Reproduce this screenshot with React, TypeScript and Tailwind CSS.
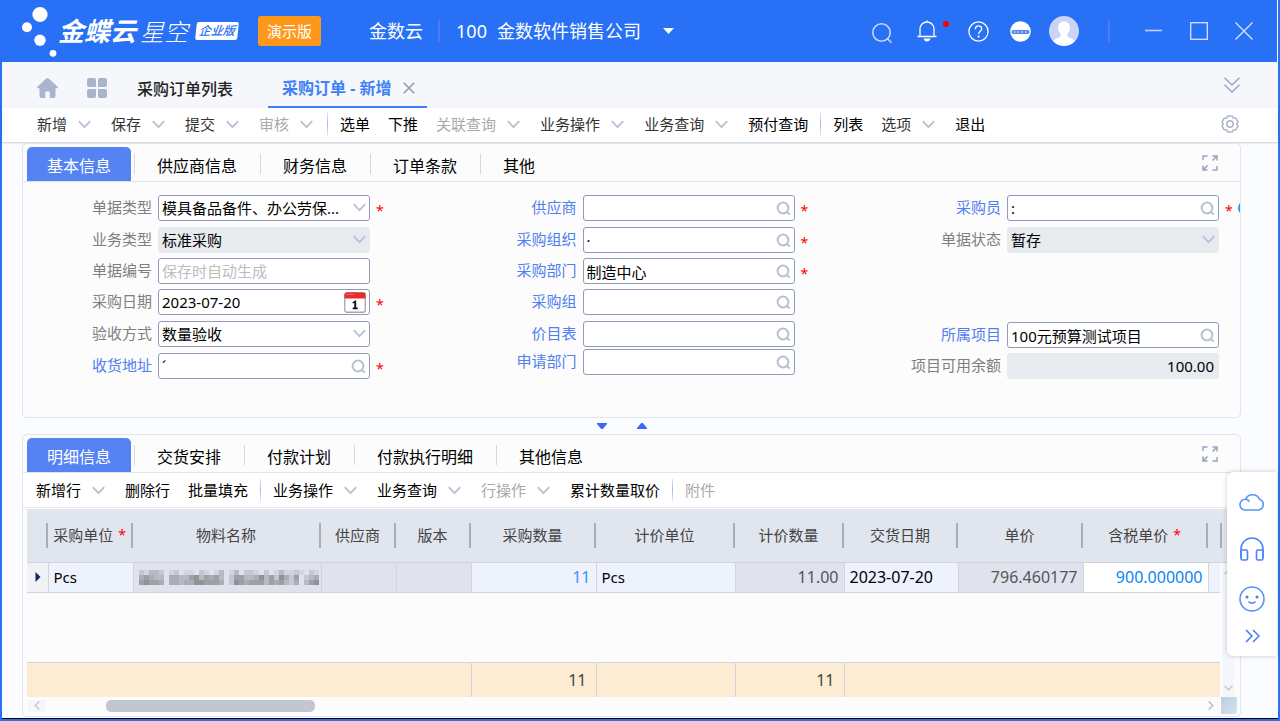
import type { ReactNode } from 'react'
import { clsx } from 'clsx'

const FONT = "font-['Noto_Sans','Noto_Sans_CJK_SC',sans-serif]"

type MenuItem = { label: string; menu?: boolean; disabled?: boolean; dark?: boolean; divider?: boolean }

const mainMenu: MenuItem[] = [
  { label: '新增', menu: true },
  { label: '保存', menu: true },
  { label: '提交', menu: true },
  { label: '审核', menu: true, disabled: true, divider: true },
  { label: '选单', dark: true },
  { label: '下推', dark: true },
  { label: '关联查询', menu: true, disabled: true },
  { label: '业务操作', menu: true },
  { label: '业务查询', menu: true },
  { label: '预付查询', dark: true, divider: true },
  { label: '列表', dark: true },
  { label: '选项', menu: true },
  { label: '退出', dark: true },
]

const detailMenu: MenuItem[] = [
  { label: '新增行', menu: true, dark: true },
  { label: '删除行', dark: true },
  { label: '批量填充', dark: true, divider: true },
  { label: '业务操作', menu: true, dark: true },
  { label: '业务查询', menu: true, dark: true },
  { label: '行操作', menu: true, disabled: true },
  { label: '累计数量取价', dark: true, divider: true },
  { label: '附件', disabled: true },
]

type FieldDef = {
  id: string
  label: string
  kind: 'select' | 'text' | 'date' | 'lookup' | 'amount'
  row: string
  value?: string
  placeholder?: string
  link?: boolean
  required?: boolean
  disabled?: boolean
}

const leftFields: FieldDef[] = [
  { id: 'billType', label: '单据类型', kind: 'select', row: 'h-8', value: '模具备品备件、办公劳保...', required: true },
  { id: 'bizType', label: '业务类型', kind: 'select', row: 'h-[31px]', value: '标准采购', disabled: true },
  { id: 'billNo', label: '单据编号', kind: 'text', row: 'h-[31px]', placeholder: '保存时自动生成' },
  { id: 'date', label: '采购日期', kind: 'date', row: 'h-8', value: '2023-07-20', required: true },
  { id: 'accept', label: '验收方式', kind: 'select', row: 'h-8', value: '数量验收' },
  { id: 'address', label: '收货地址', kind: 'lookup', row: 'h-[26px]', value: 'ˊ', link: true, required: true },
]

const middleFields: FieldDef[] = [
  { id: 'supplier', label: '供应商', kind: 'lookup', row: 'h-8', link: true, required: true },
  { id: 'org', label: '采购组织', kind: 'lookup', row: 'h-[31px]', value: '·', link: true, required: true },
  { id: 'dept', label: '采购部门', kind: 'lookup', row: 'h-[31px]', value: '制造中心', link: true, required: true },
  { id: 'group', label: '采购组', kind: 'lookup', row: 'h-8', link: true },
  { id: 'priceList', label: '价目表', kind: 'lookup', row: 'h-7', link: true },
  { id: 'applyDept', label: '申请部门', kind: 'lookup', row: 'h-[26px]', link: true },
]

const buyerFields: FieldDef[] = [
  { id: 'buyer', label: '采购员', kind: 'lookup', row: 'h-8', value: ':', link: true, required: true },
  { id: 'status', label: '单据状态', kind: 'select', row: 'h-[31px]', value: '暂存', disabled: true },
]

const projectFields: FieldDef[] = [
  { id: 'project', label: '所属项目', kind: 'lookup', row: 'h-[31px]', value: '100元预算测试项目', link: true },
  { id: 'balance', label: '项目可用余额', kind: 'amount', row: 'h-[26px]', value: '100.00', disabled: true },
]

function Chevron({ className = 'text-[#b8c1d4]' }: { className?: string }) {
  return (
    <svg width="13" height="9" viewBox="0 0 13 9" fill="none" stroke="currentColor" strokeWidth="1.9" className={clsx('shrink-0', className)}>
      <path d="M0.8 1.2 6.5 7.2 12.2 1.2" />
    </svg>
  )
}

function Magnifier() {
  return (
    <svg width="15" height="15" viewBox="0 0 15 15" fill="none" stroke="#b9c0d0" strokeWidth="2">
      <circle cx="7" cy="7" r="5.4" />
      <path d="M10.2 10.4 13.8 13.6" />
    </svg>
  )
}

function CalendarIcon() {
  return (
    <svg width="22" height="21" viewBox="0 0 22 21">
      <rect x="0.75" y="0.75" width="20.5" height="19.5" rx="2" fill="#fff" stroke="#a6a6a6" strokeWidth="1.3" />
      <path d="M0.5 6.5V2.5a2 2 0 0 1 2-2h17a2 2 0 0 1 2 2v4z" fill="#ec2a2a" />
      <path d="M2.5 2.5h8" stroke="#f79a9a" strokeDasharray="1 1" />
      <path d="M8.6 10.2 11 8.6h1.2v7h1.5v1.6H8.7v-1.6h1.6v-4.7l-1.7.7z" fill="#111" />
    </svg>
  )
}

function Expand() {
  return (
    <svg width="16" height="16" viewBox="0 0 16 16" fill="none" stroke="#98a3bb" strokeWidth="1.5">
      <path d="M1 5V1h4.500M15 11V15h-4.500" />
      <path d="M10.500 5.500 14.600 1.400M10.500 1H15v4.500M5.500 10.500 1.400 14.600M1 10.500V15h4.500" />
    </svg>
  )
}

function Logo() {
  return (
    <svg width="36" height="52" viewBox="0 0 36 52" fill="#fff">
      <circle cx="18" cy="9.5" r="7.6" />
      <circle cx="5" cy="22.3" r="5" />
      <circle cx="18" cy="35.3" r="5.7" />
      <circle cx="31" cy="48.3" r="3.4" />
    </svg>
  )
}

function Toolbar({ items }: { items: MenuItem[] }) {
  return (
    <div className="flex items-center">
      {items.map((item) => (
        <div key={item.label} className="flex items-center">
          <button
            className={clsx(
              'flex items-center gap-[11px] pl-[9px] text-[15px] leading-5 whitespace-nowrap',
              item.menu ? 'pr-[11px]' : 'pr-[9px]',
              item.disabled ? 'text-[#a9a9a9]' : item.dark ? 'text-black' : 'text-[#333]',
            )}
          >
            {item.label}
            {item.menu && <Chevron />}
          </button>
          {item.divider && (
            <span className="mx-[3px] h-6 w-px bg-linear-to-b from-[#e6eef8] via-[#9dbce6] to-[#e6eef8]" />
          )}
        </div>
      ))}
    </div>
  )
}

function TabRow({ tabs }: { tabs: string[] }) {
  return (
    <div className="flex h-[38px] items-end justify-between border-b border-[#dfe4ed] pl-1 pr-[22px]">
      <div role="tablist" className="flex items-end">
        {tabs.map((tab, i) =>
          i === 0 ? (
            <button
              key={tab}
              role="tab"
              aria-selected="true"
              className="mr-[3px] h-[34px] rounded-t-[5px] bg-[#5583f3] px-5 pt-1 text-base leading-6 text-white"
            >
              {tab}
            </button>
          ) : (
            <button key={tab} role="tab" aria-selected="false" className="flex h-[34px] items-center text-base leading-6 text-black">
              <span className="h-5 w-px bg-[#cfd8ea]" />
              <span className="pt-1 pl-[22px] pr-[23px]">{tab}</span>
            </button>
          ),
        )}
      </div>
      <button aria-label="展开" className="mb-[10px]">
        <Expand />
      </button>
    </div>
  )
}

function Control({ field }: { field: FieldDef }) {
  const box = clsx(
    'h-[26px] w-full rounded-[3px] border pl-[3px] text-[15px] leading-5 text-black outline-none placeholder:text-[#bdbdbd]',
    field.disabled ? 'border-[#e7eaef] bg-[#e7eaef] opacity-100' : 'border-[#8f9bb8] bg-white',
  )
  if (field.kind === 'select') {
    return (
      <>
        <select id={field.id} disabled={field.disabled} className={clsx(box, 'appearance-none pr-7')}>
          <option>{field.value}</option>
        </select>
        <span className="pointer-events-none absolute top-[8px] right-1">
          <Chevron />
        </span>
      </>
    )
  }
  if (field.kind === 'amount') {
    return <input id={field.id} readOnly defaultValue={field.value} className={clsx(box, 'pr-1 text-right text-base')} />
  }
  return (
    <>
      <input
        id={field.id}
        defaultValue={field.value}
        placeholder={field.placeholder}
        className={clsx(box, field.kind === 'date' && 'text-base')}
      />
      {field.kind === 'lookup' && (
        <button aria-label={`查找${field.label}`} className="absolute top-[6px] right-1">
          <Magnifier />
        </button>
      )}
      {field.kind === 'date' && (
        <button aria-label="选择日期" className="absolute top-[3px] right-1">
          <CalendarIcon />
        </button>
      )}
    </>
  )
}

function Field({ field, children }: { field: FieldDef; children?: ReactNode }) {
  return (
    <div className={clsx('relative flex items-start gap-[6px]', field.row)}>
      <label
        htmlFor={field.id}
        className={clsx(
          'w-[92px] pt-[2px] text-right text-[15px] leading-5 whitespace-nowrap',
          field.link ? 'text-[#4f7ff0]' : 'text-[#7f7f7f]',
        )}
      >
        {field.label}
      </label>
      <div className="relative h-[26px] w-[212px]">
        <Control field={field} />
      </div>
      <span className="w-[7px] pt-1 text-sm leading-6 text-[#f00]">{field.required ? '*' : ''}</span>
      {children}
    </div>
  )
}

// Darkness of each 5px block over the hidden material name, row by row
const mosaic = [
  '213320120110210130130221020131121021',
  '454330443356354530255334635264250234',
  '565540443446655540265455535453240356',
]

function Masked() {
  return (
    <svg width="180" height="15" viewBox="0 0 180 15" className="block" shapeRendering="crispEdges">
      {mosaic.flatMap((line, y) =>
        line.split('').map((d, x) => (
          <rect key={`${y}-${x}`} x={x * 5} y={y * 5} width="5" height="5" fill="#4d4d50" opacity={Number(d) * 0.09} />
        )),
      )}
    </svg>
  )
}

type Column = { title: string; col: string; required?: boolean; align?: string; value?: ReactNode; tone?: string; total?: string }

const READONLY = 'bg-[#e0e3ed] text-[#555] text-base'

const columns: Column[] = [
  { title: '采购单位', col: 'w-[85px]', required: true, value: 'Pcs', tone: 'text-black' },
  { title: '物料名称', col: 'w-[188px]', value: <Masked />, tone: 'bg-[#e0e3ed]' },
  { title: '供应商', col: 'w-[75px]', tone: READONLY },
  { title: '版本', col: 'w-[75px]', tone: READONLY },
  { title: '采购数量', col: 'w-[125px]', align: 'text-right', value: '11', tone: 'text-[#3d97f5] text-base', total: '11' },
  { title: '计价单位', col: 'w-[139px]', value: 'Pcs', tone: 'text-black' },
  { title: '计价数量', col: 'w-[109px]', align: 'text-right', value: '11.00', tone: READONLY, total: '11' },
  { title: '交货日期', col: 'w-[114px]', value: '2023-07-20', tone: 'text-black text-base' },
  { title: '单价', col: 'w-[125px]', align: 'text-right', value: '796.460177', tone: READONLY },
  { title: '含税单价', col: 'w-[125px]', required: true, align: 'text-right', value: '900.000000', tone: 'bg-white text-[#0a84f5] text-base' },
]

function DetailTable() {
  return (
    <table className="w-full table-fixed border-collapse text-[15px] leading-5">
      <colgroup>
        <col className="w-[21px]" />
        {columns.map((c) => (
          <col key={c.title} className={c.col} />
        ))}
        <col />
      </colgroup>
      <thead className="bg-[#e1e5ee] text-[#444]">
        <tr className="h-[53px] border-b border-[#d0d4dc]">
          <th className="p-0">
            <div className="h-[25px] border-r-2 border-[#a9adb6]" />
          </th>
          {columns.map((c) => (
            <th key={c.title} className="p-0 font-normal">
              <div className="flex h-[25px] items-center justify-center gap-[5px] border-r-2 border-[#a9adb6] whitespace-nowrap">
                {c.title}
                {c.required && <span className="text-sm text-[#f00]">*</span>}
              </div>
            </th>
          ))}
          <th className="p-0" />
        </tr>
      </thead>
      <tbody>
        <tr className="h-[30px] border-b border-[#d0d4dc] bg-[#eef2fd]">
          <td className="border-r border-[#d0d4dc] bg-[#f1f2f5] p-0">
            <svg width="6" height="10" viewBox="0 0 6 10" className="ml-2">
              <path d="M0.5 0 5.5 5 0.5 10z" fill="#0b2a66" />
            </svg>
          </td>
          {columns.map((c) => (
            <td key={c.title} className={clsx('overflow-hidden border-r border-[#d0d4dc] px-[5px] py-0', c.align, c.tone)}>
              {c.value}
            </td>
          ))}
          <td />
        </tr>
        <tr className="h-[70px]">
          <td colSpan={12} />
        </tr>
      </tbody>
      <tfoot>
        <tr className="h-[35px] border-t border-[#d0d4dc] bg-[#fcecd2] text-base text-[#444]">
          <td />
          {columns.map((c, i) => (
            <td key={c.title} className={clsx('p-0 pr-[9px] text-right', (i >= 3 && i <= 6) && 'border-r border-[#d0d4dc]')}>
              {c.total}
            </td>
          ))}
          <td />
        </tr>
      </tfoot>
    </table>
  )
}

function TopBar() {
  return (
    <header className="flex h-[62px] items-center justify-between border-r border-white bg-[#2870f5] pr-[24px] pl-5 text-white">
      <div className="flex items-center">
        <Logo />
        <span className="flex items-baseline gap-1 italic whitespace-nowrap">
          <b className="text-[26px] leading-8 font-bold">金蝶云</b>
          <span className="text-2xl leading-8 font-light">星空</span>
        </span>
        <span className="ml-2 -skew-x-6 rounded-[2px] bg-white px-[3px] text-xs leading-[18px] font-medium text-[#2870f5] italic">企业版</span>
        <span className="ml-5 rounded-[3px] bg-[#fe981b] px-[9px] text-[15px] leading-[30px]">演示版</span>
        <span className="ml-12 text-lg leading-6">金数云</span>
        <span className="mr-4 ml-[15px] h-[22px] w-[2px] bg-[#5377fb]" />
        <button className="flex items-center gap-[10px] text-lg leading-6">
          <span>100</span>
          <span>金数软件销售公司</span>
          <svg width="11" height="6" viewBox="0 0 11 6" className="ml-3">
            <path d="M0 0h11L5.500 6z" fill="#fff" />
          </svg>
        </button>
      </div>
      <div className="flex items-center">
        <button aria-label="搜索">
          <svg width="22" height="22" viewBox="0 0 22 22" fill="none" stroke="#c5d8fd" strokeWidth="1.6" className="mt-1">
            <circle cx="10.500" cy="10.500" r="8.700" />
            <path d="M16.500 16.700 20.500 20.700" />
          </svg>
        </button>
        <button aria-label="通知" className="relative ml-6">
          <svg width="20" height="22" viewBox="0 0 20 22" fill="none" stroke="#fff" strokeWidth="1.3">
            <path d="M10 0.500V2M3 16.500V9a7 7 0 0 1 14 0v7.500M0.500 16.500h19" />
            <path d="M6.500 18.500h7c-.6 2-1.800 3-3.500 3s-2.900-1-3.500-3z" fill="#fff" stroke="none" />
          </svg>
          <span className="absolute top-px -right-3 size-[6px] rounded-full bg-[#f00]" />
        </button>
        <button aria-label="帮助" className="ml-[31px]">
          <svg width="21" height="21" viewBox="0 0 21 21" fill="none" stroke="#fff" strokeWidth="1.3">
            <circle cx="10.500" cy="10.500" r="9.600" />
            <path d="M7.400 8.200c0-2 1.300-3.300 3.200-3.300s3.100 1.200 3.100 2.900c0 2.300-3.100 2.500-3.100 5.200" />
            <circle cx="10.600" cy="15.600" r="1.100" fill="#fff" stroke="none" />
          </svg>
        </button>
        <button aria-label="消息" className="ml-[21px]">
          <svg width="21" height="21" viewBox="0 0 21 21">
            <circle cx="10.500" cy="10.500" r="10.300" fill="#fff" />
            <rect x="1.500" y="9" width="18" height="4" rx="2" fill="#4d86ee" />
            <path d="M4 11h13" stroke="#cfe0ff" strokeWidth="1.500" strokeDasharray="1.500 2.200" />
          </svg>
        </button>
        <button aria-label="用户" className="ml-[18px]">
          <svg width="30" height="30" viewBox="0 0 30 30">
            <circle cx="15" cy="15" r="15" fill="#c9d4f7" />
            <path
              d="M15 5.500c3.700 0 6 2.500 6 6 0 2.700-1 5-2.500 6.300v2.600c1.500 1.600 5.400 1.800 7.600 4.700A15 15 0 0 1 15 30a15 15 0 0 1-11.100-4.900c2.200-2.900 6.100-3.100 7.600-4.700v-2.600C10 16.500 9 14.200 9 11.500c0-3.500 2.300-6 6-6z"
              fill="#fff"
            />
          </svg>
        </button>
        <span className="mx-[29px] h-[22px] w-[2px] bg-[#5377fb]" />
        <button aria-label="最小化" className="ml-[6px]">
          <svg width="17" height="20" viewBox="0 0 17 20" stroke="#bcd2fc" strokeWidth="1.600">
            <path d="M0 9.500h17" />
          </svg>
        </button>
        <button aria-label="最大化" className="ml-7">
          <svg width="18" height="18" viewBox="0 0 18 18" fill="none" stroke="#d6e4fe" strokeWidth="1.300">
            <rect x="0.700" y="0.700" width="16.600" height="16.600" />
          </svg>
        </button>
        <button aria-label="关闭" className="ml-[27px]">
          <svg width="18" height="18" viewBox="0 0 18 18" stroke="#d6e4fe" strokeWidth="1.300">
            <path d="M0.500 0.500 17.500 17.500M17.500 0.500 0.500 17.500" />
          </svg>
        </button>
      </div>
    </header>
  )
}

function PageTabs() {
  return (
    <nav className="flex h-[46px] items-center justify-between bg-[#f5f7fb] pr-[38px] pl-[35px]">
      <div className="flex h-full items-center">
        <button aria-label="首页">
          <svg width="21" height="20" viewBox="0 0 21 20" fill="#a9b5ce" className="mt-[6px]">
            <path d="M9.300.5a1.800 1.800 0 0 1 2.400 0l8.700 7.900c.9.900.5 1.900-.6 1.900H18.500V18a2 2 0 0 1-2 2h-3.700v-5.500a1 1 0 0 0-1-1H9.200a1 1 0 0 0-1 1V20H4.500a2 2 0 0 1-2-2v-7.700H1.200C.1 10.300-.3 9.300.600 8.400z" />
          </svg>
        </button>
        <button aria-label="应用" className="ml-[29px]">
          <svg width="20" height="20" viewBox="0 0 20 20" fill="#a9b5ce" className="mt-[6px]">
            <path d="M2 0h5a2 2 0 0 1 2 2v7H2a2 2 0 0 1-2-2V2a2 2 0 0 1 2-2zM13 0h5a2 2 0 0 1 2 2v5a2 2 0 0 1-2 2h-7V2a2 2 0 0 1 2-2zM2 11h7v7a2 2 0 0 1-2 2H2a2 2 0 0 1-2-2v-5a2 2 0 0 1 2-2zM11 11h7a2 2 0 0 1 2 2v5a2 2 0 0 1-2 2h-5a2 2 0 0 1-2-2z" />
          </svg>
        </button>
        <a href="#list" className="ml-[30px] pt-2 text-base leading-6 font-medium text-[#222]">
          采购订单列表
        </a>
        <div className="ml-[35px] flex h-full items-center gap-3 border-b-2 border-[#3f82f7] pt-2 pr-3 pl-[14px]">
          <a href="#new" className="text-base leading-6 font-bold text-[#3f82f7]">
            采购订单 - 新增
          </a>
          <button aria-label="关闭标签">
            <svg width="12" height="12" viewBox="0 0 12 12" stroke="#8f9bb3" strokeWidth="1.500">
              <path d="M0.700 0.700 11.300 11.300M11.300 0.700 0.700 11.300" />
            </svg>
          </button>
        </div>
      </div>
      <button aria-label="收起">
        <svg width="16" height="16" viewBox="0 0 16 16" fill="none" stroke="#9aa6be" strokeWidth="1.500">
          <path d="M0.500 0.700 8 8 15.500 0.700M0.500 7.700 8 15 15.500 7.700" />
        </svg>
      </button>
    </nav>
  )
}

function DetailScroll() {
  return (
    <div className="flex w-[17px] shrink-0 flex-col">
      <div className="flex h-[54px] items-center border-b border-[#d0d4dc] bg-[#e1e5ee]">
        <span className="h-[25px] w-[2px] bg-[#a9adb6]" />
      </div>
      <div className="ml-[2px] flex w-3 flex-1 flex-col items-center justify-between bg-[#f3f6fb] py-[6px]">
        <svg width="9" height="6" viewBox="0 0 9 6" fill="none" stroke="#c5c9d0" strokeWidth="1.500">
          <path d="M0.500 5.300 4.500 1.200 8.500 5.300" />
        </svg>
        <svg width="9" height="6" viewBox="0 0 9 6" fill="none" stroke="#c5c9d0" strokeWidth="1.500">
          <path d="M0.500 0.700 4.500 4.800 8.500 0.700" />
        </svg>
      </div>
    </div>
  )
}

function SideDock() {
  return (
    <aside className="absolute right-px bottom-[63px] flex h-[184px] w-[50px] flex-col items-center rounded-l-md bg-white pt-[19px] shadow-[0_0_5px_rgba(0,0,0,0.2)]">
      <button aria-label="云服务">
        <svg width="26" height="20" viewBox="0 0 26 20" fill="none" stroke="#5b92f8" strokeWidth="1.600">
          <path d="M6 19A5.300 5.300 0 0 1 6.600 8.300 7.600 7.600 0 0 1 20.500 8.200 5.600 5.600 0 0 1 19.700 19zM6.600 8.300c1.900 0 3.100.9 3.700 2.400" />
        </svg>
      </button>
      <button aria-label="客服" className="mt-[26px]">
        <svg width="24" height="24" viewBox="0 0 24 24" fill="none" stroke="#4a86f7" strokeWidth="1.600">
          <path d="M1 21V12a11 11 0 0 1 22 0v9" />
          <rect x="1" y="13" width="6.500" height="10" rx="1.500" />
          <rect x="16.500" y="13" width="6.500" height="10" rx="1.500" />
        </svg>
      </button>
      <button aria-label="反馈" className="mt-[25px]">
        <svg width="26" height="26" viewBox="0 0 26 26" fill="none" stroke="#5b92f8" strokeWidth="1.600">
          <circle cx="13" cy="13" r="12" />
          <circle cx="8" cy="11" r="1.500" fill="#3f7ef6" stroke="none" />
          <circle cx="18" cy="11" r="1.500" fill="#3f7ef6" stroke="none" />
          <path d="M9.500 15.500c1.800 2.200 5.200 2.200 7 0" />
        </svg>
      </button>
      <button aria-label="收起侧栏" className="mt-[17px]">
        <svg width="15" height="14" viewBox="0 0 15 14" fill="none" stroke="#3f7ef6" strokeWidth="1.500">
          <path d="M1 1 7 7 1 13M8 1 14 7 8 13" />
        </svg>
      </button>
    </aside>
  )
}

export default function App() {
  return (
    <div className={clsx('relative flex min-h-screen flex-col border-x-2 border-b-2 border-[#2870f5] bg-[#fafcff]', FONT)}>
      <TopBar />
      <PageTabs />
      <div className="flex h-[34px] items-center justify-between bg-white pr-[39px] pb-[2px] pl-[26px] shadow-[0_1px_2px_rgba(0,0,0,0.2)]">
        <Toolbar items={mainMenu} />
        <button aria-label="设置">
          <svg width="18" height="18" viewBox="0 0 18 18" fill="none" stroke="#b0b9ca" strokeWidth="1.600">
            <path d="M6.900 1h4.200l1.300 2.200 2.600.1L17 7l-1.300 2L17 11l-2 3.700-2.600.1L11.100 17H6.900l-1.300-2.200-2.600-.1L1 11l1.300-2L1 7l2-3.700 2.600-.1z" strokeLinejoin="round" />
            <circle cx="9" cy="9" r="3.200" />
          </svg>
        </button>
      </div>

      <main className="flex flex-1 flex-col border-b border-black pt-px pr-[37px] pb-px pl-5">
        <section className="overflow-hidden rounded-[5px] border border-[#dfe4ed] bg-[#fcfcfc]">
          <TabRow tabs={['基本信息', '供应商信息', '财务信息', '订单条款', '其他']} />
          <form className="flex justify-between pt-[13px] pr-2 pb-[38px] pl-[37px]">
            <div>
              {leftFields.map((f) => (
                <Field key={f.id} field={f} />
              ))}
            </div>
            <div>
              {middleFields.map((f) => (
                <Field key={f.id} field={f} />
              ))}
            </div>
            <div className="flex flex-col justify-between">
              <div>
                {buyerFields.map((f) => (
                  <Field key={f.id} field={f}>
                    {f.id === 'buyer' && (
                      <span className="absolute top-[6px] -right-[20px] size-[14px] rounded-full bg-[#12a5f0]" />
                    )}
                  </Field>
                ))}
              </div>
              <div>
                {projectFields.map((f) => (
                  <Field key={f.id} field={f} />
                ))}
              </div>
            </div>
          </form>
        </section>

        <div className="flex h-4 items-center justify-center gap-[30px] pr-5">
          <button aria-label="向下折叠">
            <svg width="10" height="6" viewBox="0 0 10 6">
              <path d="M0 0h10v1L5.800 6H4.200L0 1z" fill="#3b66fb" />
            </svg>
          </button>
          <button aria-label="向上折叠">
            <svg width="10" height="6" viewBox="0 0 10 6">
              <path d="M0 6h10V5L5.800 0H4.200L0 5z" fill="#3b66fb" />
            </svg>
          </button>
        </div>

        <section className="flex flex-1 flex-col rounded-[5px] border border-[#dfe4ed] bg-[#fcfcfc]">
          <TabRow tabs={['明细信息', '交货安排', '付款计划', '付款执行明细', '其他信息']} />
          <div className="flex h-[35px] items-center border-b border-[#e9ebef] bg-white pl-1">
            <Toolbar items={detailMenu} />
          </div>
          <div className="mt-px flex pr-[3px] pl-1">
            <div className="min-w-0 flex-1">
              <DetailTable />
            </div>
            <DetailScroll />
          </div>
          <div className="flex h-[17px] items-center justify-between pr-[3px] pl-[5px]">
            <div className="flex items-center">
              <span className="flex h-3 w-[18px] items-center justify-center bg-[#f3f6fb]">
                <svg width="6" height="9" viewBox="0 0 6 9" fill="none" stroke="#c5c9d0" strokeWidth="1.500">
                  <path d="M5.300 0.500 1.200 4.500 5.300 8.500" />
                </svg>
              </span>
              <span className="ml-[60px] h-3 w-[209px] rounded-[5px] bg-[#c2c6d0]" />
            </div>
            <div className="flex items-center gap-[7px]">
              <svg width="6" height="9" viewBox="0 0 6 9" fill="none" stroke="#b9bdc5" strokeWidth="1.500">
                <path d="M0.700 0.500 4.800 4.500 0.700 8.500" />
              </svg>
              <span className="h-[17px] w-4 rounded-br-[3px] bg-linear-to-br from-[#bccddd] to-[#d5e2ef]" />
            </div>
          </div>
        </section>
      </main>
      <SideDock />
    </div>
  )
}
